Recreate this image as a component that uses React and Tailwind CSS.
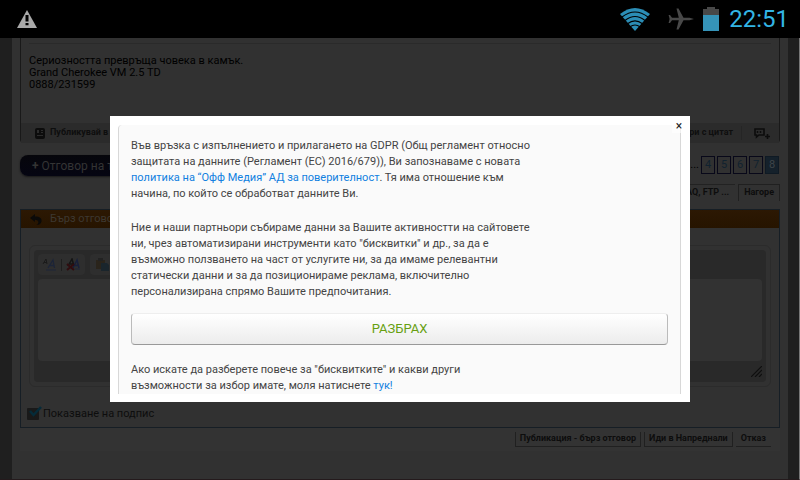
import React, { useState } from 'react';

const pages = ['4', '5', '6', '7', '8'];

const WarningIcon = () => (
  <svg width="20" height="18" viewBox="0 0 20 18" aria-hidden="true">
    <path d="M10 0 20 18H0Z" fill="#a9a9a9" />
    <path d="M8.500 5h3v6.500h-3zM8.500 13h3v2.200h-3z" fill="#000" />
  </svg>
);

const WifiIcon = () => (
  <svg width="30" height="23" viewBox="0 0 30 23" aria-hidden="true">
    <path d="M0 6Q15-6 30 6L15 23Z" fill="#2b8db5" />
    <g fill="none" stroke="#000" strokeWidth="1.100">
      <path d="M2 9Q15-1 28 9" />
      <path d="M5 12.500Q15 4.500 25 12.500" />
      <path d="M7.500 15.800Q15 10 22.500 15.800" />
      <path d="M10 18.800Q15 15.200 20 18.800" />
    </g>
  </svg>
);

const PlaneIcon = () => (
  <svg width="26" height="22" viewBox="0 0 26 22" aria-hidden="true">
    <path
      d="M26 11 21.500 12.300H15.500L10.500 21.500H8.500L10.800 12.300H4L2 15H.6L1.600 11 .6 7H2L4 9.700H10.800L8.500.5H10.500L15.500 9.700H21.500Z"
      fill="#484848"
    />
  </svg>
);

const BatteryIcon = () => (
  <svg width="16" height="24" viewBox="0 0 16 24" aria-hidden="true">
    <path d="M0 2h4V0h8v2h4v7H0z" fill="#484848" />
    <path d="M0 8h16v16H0z" fill="#3593b8" />
  </svg>
);

const StatusBar = () => (
  <header className="flex h-[38px] items-center justify-between bg-black pl-[17px] pr-[11px]">
    <WarningIcon />
    <div className="flex items-center">
      <WifiIcon />
      <span className="ml-[18px] mr-[9px]">
        <PlaneIcon />
      </span>
      <BatteryIcon />
      <span className="ml-[10px] text-[24px] leading-[38px] text-[#33b5e5]">22:51</span>
    </div>
  </header>
);

const Post = () => (
  <article className="rounded-b-sm border-x border-[#191919]">
    <div className="h-[85px] px-2 pt-[5px]">
      <div className="border-t border-[#2a2a2a] pt-[11px] text-[11px] leading-[12px] text-black">
        <p>Сериозността превръща човека в камък.</p>
        <p>Grand Cherokee VM 2.5 TD</p>
        <p>0888/231599</p>
      </div>
    </div>
    <footer className="flex h-[20px] items-center justify-between bg-[#2b2b2b] pl-[14px] pr-[9px] text-[9px] font-bold text-[#0e0e0e]">
      <a href="#blog" className="flex items-center gap-[5px]">
        <svg width="10" height="11" viewBox="0 0 10 11" aria-hidden="true">
          <rect width="10" height="11" rx="2" fill="#0c0c0c" />
          <path d="M2 2h2v3H2zM6 2h2v1H6zM6 4h2v1H6zM2 7h6v1H2z" fill="#2c2c2c" />
        </svg>
        Публикувай в блога
      </a>
      <div className="flex items-center">
        <a href="#quote" className="border-r border-[#252525] pr-[8px]">
          Отговори с цитат
        </a>
        <a href="#multiquote" aria-label="Мулти цитат" className="ml-[12px]">
          <svg width="16" height="11" viewBox="0 0 16 11" aria-hidden="true">
            <path d="M1 1h9v6H5L2.500 9V7H1z" fill="none" stroke="#0c0c0c" strokeWidth="1.600" />
            <path d="M3.500 3v2M6.500 3v2" stroke="#0c0c0c" strokeWidth="1.500" />
            <path d="M13.500 6v5M11 8.500h5" stroke="#0c0c0c" strokeWidth="1.600" />
          </svg>
        </a>
      </div>
    </footer>
  </article>
);

const ThreadBar = () => (
  <div className="flex justify-between pt-3">
    <a
      href="#reply"
      className="flex h-[21px] items-center rounded-lg bg-linear-to-b from-[#06060b] to-[#050512] px-[12px] text-[12px] text-[#343434] shadow-[0_1px_2px_#181818]"
    >
      <b className="mr-[3px] text-[12px]">+</b>Отговор на темата
    </a>
    <div className="flex flex-col items-end">
      <nav className="flex items-center gap-[2px] pr-[1px] pt-[1px] text-[11px] text-[#10222f]">
        <a href="#p1" className="h-[18px] w-[30px] border border-[#080819]" aria-label="Страница 1" />
        <span className="text-black">...</span>
        {pages.map((p) => (
          <a
            key={p}
            href={`#p${p}`}
            className={`flex h-[18px] w-[14px] items-center justify-center border ${
              p === '8' ? 'border-[#0f1a24] bg-[#15212b] text-[#3f4549]' : 'border-[#080819]'
            }`}
          >
            {p}
          </a>
        ))}
      </nav>
      <div className="mt-[10px] flex gap-[3px] text-[9px] font-bold text-[#0d0d0d]">
        <a href="#faq" className="flex h-[17px] items-center border-t border-[#222] px-[6px]">
          Новини, FAQ, FTP ...
        </a>
        <a href="#top" className="flex h-[17px] items-center border border-b-0 border-[#202020] px-[5px]">
          Нагоре
        </a>
      </div>
    </div>
  </div>
);

const EditorToolbar = () => (
  <div className="flex h-[21px] gap-[5px]">
    <div className="flex w-[47px] items-center justify-evenly rounded-sm bg-[#2e2e2e]">
      <button type="button" aria-label="Премахни форматирането">
        <svg width="15" height="13" viewBox="0 0 15 13" fill="none" aria-hidden="true">
          <path d="M1 6 4 1 5 6M2 4.500h3" stroke="#1a1a1a" />
          <path d="M6 10 11 2 12.500 10M8 7.500h4" stroke="#1c2438" strokeWidth="1.300" />
          <path d="M4 12h10" stroke="#1c2438" />
        </svg>
      </button>
      <span className="h-[12px] w-px bg-[#1f1f1f]" />
      <button type="button" aria-label="Изчисти">
        <svg width="15" height="13" viewBox="0 0 15 13" fill="none" aria-hidden="true">
          <path d="M2 8 6 1 8 8M4 6h3" stroke="#141414" strokeWidth="1.500" />
          <path d="M7 10 11 2 13 10M9 7.500h4" stroke="#171f3a" strokeWidth="1.500" />
          <path d="m1 6 7 6M8 6l-7 6" stroke="#300c0f" strokeWidth="2" />
          <path d="M9 11h5" stroke="#1c2438" />
        </svg>
      </button>
    </div>
    <div className="flex w-[70px] items-center rounded-sm bg-[#2e2e2e] px-[6px]">
      <button type="button" aria-label="Постави">
        <svg width="13" height="13" viewBox="0 0 13 13" aria-hidden="true">
          <path d="M0 2h9v9H0z" fill="#2a241b" />
          <path d="M2 0h5v3H2z" fill="#222" />
          <path d="M5 5h6l2 2v6H5z" fill="#1a252c" />
        </svg>
      </button>
    </div>
  </div>
);

const QuickReply = () => (
  <section className="mt-2 border border-[#161e25]">
    <h2 className="flex h-[18px] items-center bg-linear-to-b from-[#2c1803] to-[#261400] pl-[9px] text-[11px] text-[#3d3831]">
      <svg className="mr-[8px]" width="12" height="12" viewBox="0 0 12 12" aria-hidden="true">
        <path d="M0 5 5 1v2.500c5 0 7 2 6.500 5C11 11 9 12 6.500 12 9 10.500 9.500 7 5 6.700V9z" fill="#0b0a09" />
      </svg>
      Бърз отговор
    </h2>
    <div className="px-2 pb-[5px] pt-[17px]">
      <div className="rounded-md border border-[#2b2b2b] p-1">
        <div className="rounded-sm bg-[#292929] p-1">
          <EditorToolbar />
          <textarea
            aria-label="Съобщение"
            className="mt-1 block h-[82px] w-full resize-none rounded-sm bg-[#323232] outline-none"
          />
          <div className="flex h-[17px] items-end justify-end pb-px">
            <svg width="11" height="11" viewBox="0 0 11 11" aria-hidden="true">
              <path d="M0 11 11 0M4 11l7-7M8 11l3-3" stroke="#0f0f0f" strokeWidth="1.200" />
            </svg>
          </div>
        </div>
      </div>
      <label className="relative mt-[19px] flex h-[16px] items-center gap-1 text-[11px] text-[#0d0d0d]">
        <input
          type="checkbox"
          defaultChecked
          className="-ml-[2px] size-[12px] appearance-none rounded-[1px] bg-[#191919]"
        />
        <svg className="absolute left-0 top-0" width="13" height="11" viewBox="0 0 13 11" aria-hidden="true">
          <path d="m1 5 3.500 4L12 1" fill="none" stroke="#052b39" strokeWidth="2.500" />
        </svg>
        Показване на подпис
      </label>
    </div>
  </section>
);

const FormButtons = () => (
  <div className="flex justify-end gap-[3px] bg-[#333] px-[9px] pb-1 pt-1 text-[9px] font-bold text-[#0d0d0d]">
    <button type="submit" className="h-[15px] border border-t-0 border-[#202020] px-1">
      Публикация - бърз отговор
    </button>
    <button type="button" className="h-[15px] border border-t-0 border-[#202020] px-1">
      Иди в Напреднали
    </button>
    <button type="button" className="h-[15px] border-b border-[#202020] px-[5px]">
      Отказ
    </button>
  </div>
);

const ConsentDialog = ({ onClose }) => (
  <div
    role="dialog"
    aria-label="GDPR"
    className="absolute left-[110px] right-[109px] top-[78px] bg-white pb-2 pl-2 pr-[9px] pt-[9px]"
  >
    <div className="rounded-t-sm border-x border-[#d8d8d8] bg-[#fafafa] px-3 pt-[13px] text-[11px] leading-[16px] text-[#444]">
      <p>
        Във връзка с изпълнението и прилагането на GDPR (Общ регламент относно
        <br />
        защитата на данните (Регламент (ЕС) 2016/679)), Ви запознаваме с новата
        <br />
        <a href="#privacy" className="text-[#1080e0]">
          политика на “Офф Медия” АД за поверителност
        </a>
        . Тя има отношение към
        <br />
        начина, по който се обработват данните Ви.
      </p>
      <p className="mt-[18px]">
        Ние и наши партньори събираме данни за Вашите активностти на сайтовете
        <br />
        ни, чрез автоматизирани инструменти като "бисквитки" и др., за да е
        <br />
        възможно ползването на част от услугите ни, за да имаме релевантни
        <br />
        статически данни и за да позиционираме реклама, включително
        <br />
        персонализирана спрямо Вашите предпочитания.
      </p>
      <button
        type="button"
        onClick={onClose}
        className="mt-[13px] block h-[32px] w-full rounded-sm border border-t-[#eee] border-x-[#bbb] border-b-[#999] bg-linear-to-b from-white to-[#ececec] text-[13px] text-[#669f11]"
      >
        РАЗБРАХ
      </button>
      <p className="mt-[17px]">
        Ако искате да разберете повече за "бисквитките" и какви други
        <br />
        възможности за избор имате, моля натиснете{' '}
        <a href="#more" className="text-[#1080e0]">
          тук!
        </a>
      </p>
    </div>
    <button
      type="button"
      aria-label="Затвори"
      onClick={onClose}
      className="absolute right-1 top-[3px] flex size-[14px] items-center justify-center bg-white/60 text-[12px] leading-none text-[#222]"
    >
      ×
    </button>
  </div>
);

export default function App() {
  const [open, setOpen] = useState(true);

  return (
    <div className="flex min-h-screen flex-col bg-[#1f1f1f] font-['Roboto','Noto_Sans',sans-serif]">
      <StatusBar />
      <div className="relative flex grow flex-col border-b border-r border-b-[#241a1c] border-r-[#777] pl-3 pr-[11px]">
        <main className="grow bg-[#313131] px-2">
          <Post />
          <ThreadBar />
          <QuickReply />
          <FormButtons />
        </main>
        {open && <ConsentDialog onClose={() => setOpen(false)} />}
      </div>
    </div>
  );
}
